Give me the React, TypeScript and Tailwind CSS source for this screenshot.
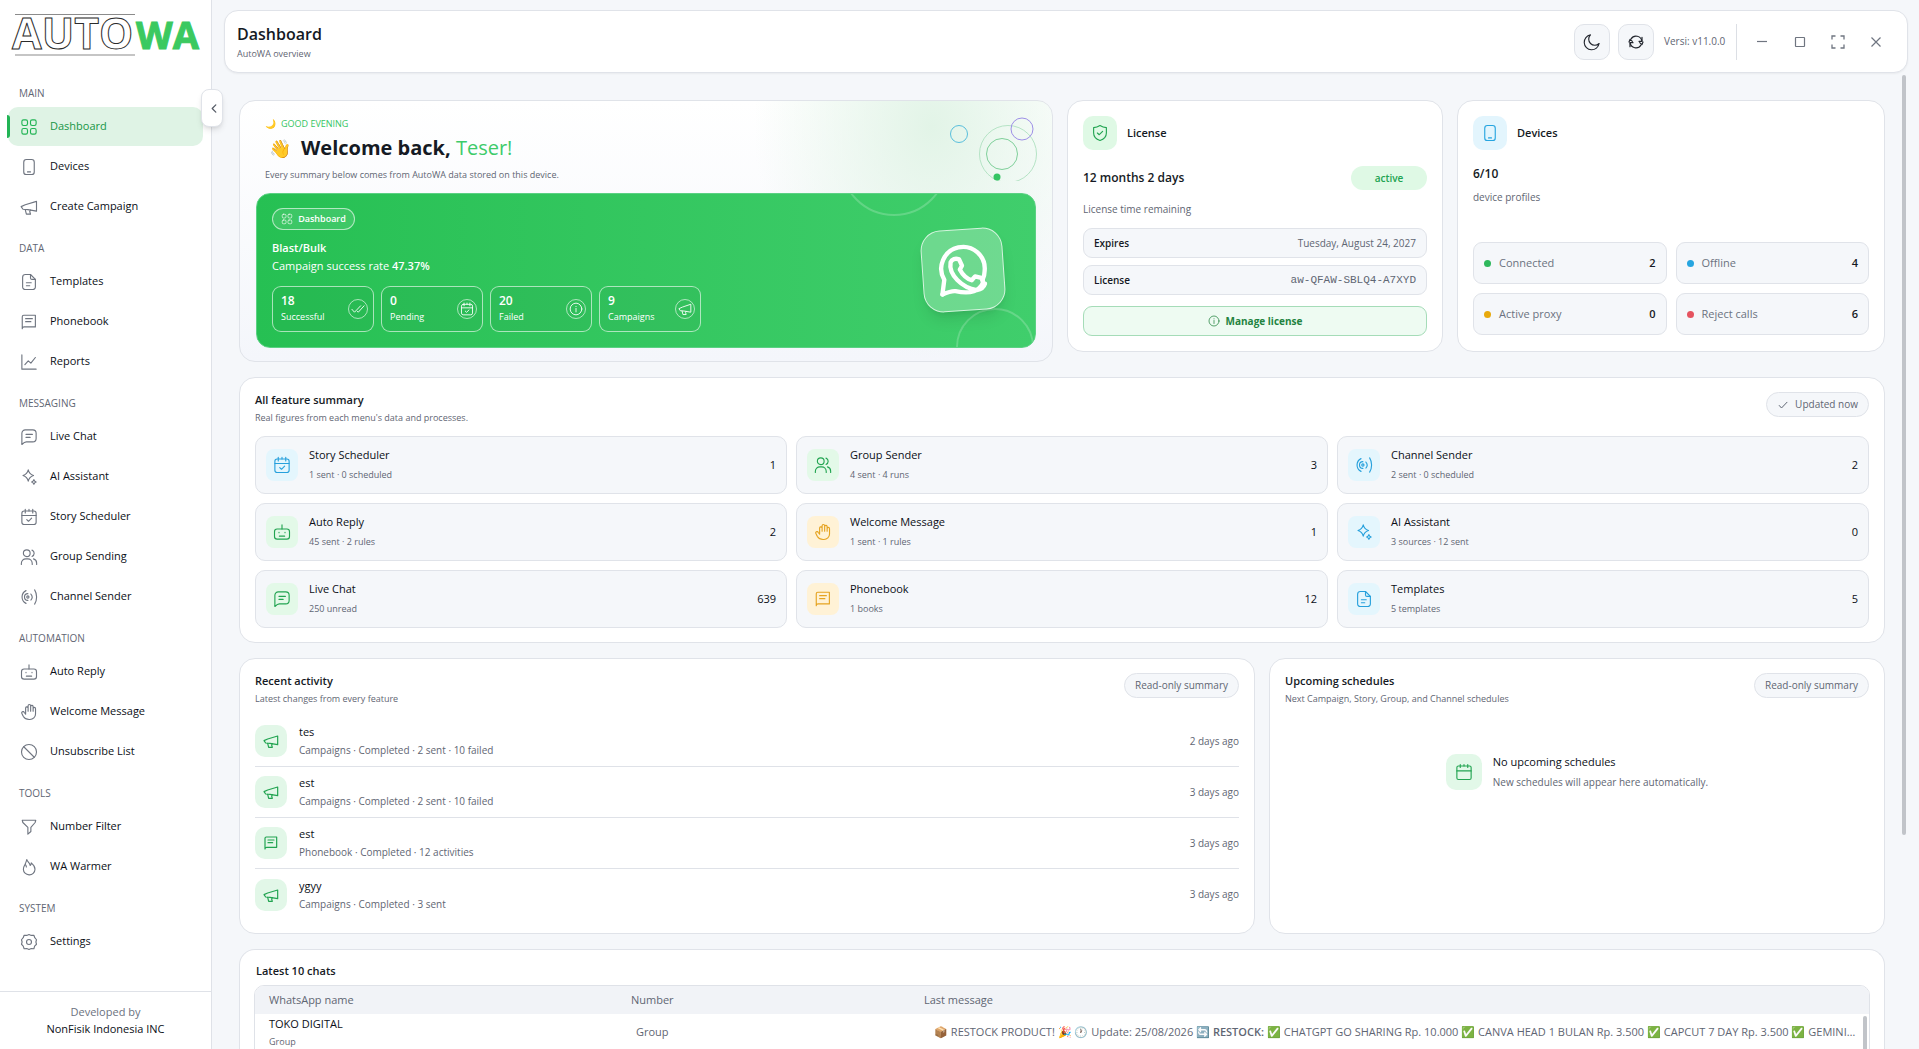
import React from "react";

type IconName =
  | "grid" | "phone" | "megaphone" | "file" | "book" | "chart" | "chat" | "sparkles" | "calendarCheck"
  | "users" | "radar" | "bot" | "hand" | "block" | "filter" | "flame" | "gear" | "shield" | "info"
  | "checks" | "check" | "calendar" | "moon" | "refresh";

const paths: Record<IconName, React.ReactNode> = {
  grid: (
    <>
      <rect x="2.5" y="2.5" width="7.5" height="7.5" rx="2.2" />
      <rect x="14" y="2.5" width="7.5" height="7.5" rx="2.2" />
      <rect x="2.5" y="14" width="7.5" height="7.5" rx="2.2" />
      <rect x="14" y="14" width="7.5" height="7.5" rx="2.2" />
    </>
  ),
  phone: (
    <>
      <rect x="5" y="2" width="14" height="20" rx="3.5" />
      <path d="M10 18.5h4" />
    </>
  ),
  megaphone: (
    <>
      <path d="M22 4.500v13L10.500 15.500l-6.500-.5L1.500 11.500 7 9z" />
      <path d="M7 15.500l1.500 6h5.500l-1-3.500 1-2" />
    </>
  ),
  file: (
    <>
      <path d="M14 2H7a3.500 3.500 0 0 0-3.500 3.500v13A3.500 3.500 0 0 0 7 22h10a3.500 3.500 0 0 0 3.500-3.500V8.500z" />
      <path d="M14 2v4.500a2 2 0 0 0 2 2h4.500M8.500 13H15M8.500 17h4.500" />
    </>
  ),
  book: (
    <>
      <path d="M3 21V5a2 2 0 0 1 2-2h15.500v15.500H5.500c-1.500 0-2.500 1-2.500 2.500z" />
      <path d="M7.500 7.500h9M7.500 11.500h7" />
    </>
  ),
  chart: (
    <>
      <path d="M2.500 2.500v19h19" />
      <path d="M6.500 15.500l4.500-5 3.500 3L20.500 6" />
    </>
  ),
  chat: (
    <>
      <path d="M2.500 22V7A4.500 4.500 0 0 1 7 2.500h10A4.500 4.500 0 0 1 21.500 7v7a4.500 4.500 0 0 1-4.500 4.500H8.500c-2.500 0-4 1.500-6 3.500z" />
      <path d="M8 8.500h8.500M8 12.500h5.500" />
    </>
  ),
  sparkles: (
    <>
      <path d="M11 2.500c1 4.500 2.500 6 7 7.500-4.500 1.500-6 3-7 7.500-1-4.500-2.500-6-7-7.500 4.500-1.500 6-3 7-7.500z" />
      <path d="M18.500 15.500c.5 2 1 2.500 3 3.200-2 .6-2.500 1.100-3 3-.5-1.900-1-2.400-3-3 2-.7 2.500-1.200 3-3.200z" />
    </>
  ),
  calendarCheck: (
    <>
      <rect x="2.500" y="4" width="19" height="18" rx="3" />
      <path d="M2.500 10h19M7 1.800V6.500M12 1.800V4M17 1.800V6.500M9 15.500l2.300 2.200 4.200-4.200" />
    </>
  ),
  users: (
    <>
      <circle cx="9" cy="7" r="4.500" />
      <path d="M1.800 22v-1.500a6 6 0 0 1 6-6h2.500a6 6 0 0 1 6 6V22M16 2.800a4.500 4.500 0 0 1 0 8.400M18 14.500a6 6 0 0 1 4.200 5.700V22" />
    </>
  ),
  radar: (
    <>
      <circle cx="10.500" cy="12" r="1.500" />
      <path d="M10.500 7.500a4.500 4.500 0 0 0 0 9M14.500 8a6 6 0 0 1 0 8M8 3.500a9.500 9.500 0 0 0 0 17M19.500 2.500c3.500 5.500 3.500 13.500 0 19" />
    </>
  ),
  bot: (
    <>
      <rect x="2" y="8" width="20" height="13.500" rx="3.500" />
      <path d="M12 2.500V8M8 12.500v.5M16 12.500v.5M8.500 17.500h7" />
    </>
  ),
  hand: (
    <path d="M7.500 14V6.500a1.700 1.700 0 0 1 3.300 0M10.800 11V3.700a1.700 1.700 0 0 1 3.400 0V11M14.200 4.500a1.700 1.700 0 0 1 3.300 0V11M17.500 7.500a1.600 1.600 0 0 1 3.200 0v7A7.500 7.500 0 0 1 13.200 22h-1C8 22 6 20.500 4.500 18l-2-4a1.700 1.700 0 0 1 3-1.700l2 2.700" />
  ),
  block: (
    <>
      <circle cx="12" cy="12" r="10" />
      <path d="M5 5l14 14" />
    </>
  ),
  filter: <path d="M3 3h18l-.8 3-5.700 6.500V18l-4 3.500v-9L3.800 6z" />,
  flame: (
    <path d="M9 2c1 3.500 4 4 4.500 8 1-.8 1.500-2 1.500-3.500 3 2.500 5 5 5 8.500A7.600 7.600 0 0 1 12 22.500 7.600 7.600 0 0 1 4.500 15c0-3.500 1.500-4.500 2.500-7 .8-2 1.500-3.500 2-6zM7 8.500c1 1 1.500 2 1.500 3.500" />
  ),
  gear: (
    <>
      <path d="M12 2l3 1.200 3.500-.2 1.200 3.300L22 9l-.8 3 .8 3-2.500 2.500-1 3.500-3.500-.2L12 22l-3-1.200-3.500.2-1.200-3.500L2 15l.8-3L2 9l2.300-2.700L5.500 3l3.500.2z" />
      <circle cx="12" cy="12" r="3.300" />
    </>
  ),
  shield: (
    <>
      <path d="M12 2C9.500 3.500 7 4.500 3.500 4.800V12c0 5 3.500 8.300 8.500 10 5-1.700 8.500-5 8.500-10V4.800C17 4.500 14.500 3.500 12 2z" />
      <path d="M8.500 12l2.500 2.300 4.500-4.500" />
    </>
  ),
  info: (
    <>
      <circle cx="12" cy="12" r="10" />
      <path d="M12 11v6M12 7.500v.3" />
    </>
  ),
  checks: <path d="M1.500 12.500l4.500 5L16.500 6.500M11 16l1.500 1.500L22.500 6.500" />,
  check: <path d="M4.500 13l4.500 5L20 6.500" />,
  calendar: (
    <>
      <rect x="2.500" y="4" width="19" height="18" rx="2" />
      <path d="M2.500 10.500h19M7 2v4M12 2v2M17 2v4" />
    </>
  ),
  moon: <path d="M21.500 14A10 10 0 1 1 10 2.500 8 8 0 0 0 21.500 14z" />,
  refresh: (
    <>
      <path d="M20.800 11A8.800 8.800 0 0 0 4.500 7.500M3.200 13A8.800 8.800 0 0 0 19.500 16.500" />
      <path d="M1.500 12l1.700-4 3.300 3M17.500 13l3.300 3 1.700-4" />
      <path d="M21 5v6h-4.500M3 19v-6h4.500" />
    </>
  ),
};

function Icon({ name, className = "size-[18px]", stroke = 1.5 }: { name: IconName; className?: string; stroke?: number }) {
  return (
    <svg viewBox="0 0 24 24" className={className} fill="none" stroke="currentColor" strokeWidth={stroke} strokeLinecap="round" strokeLinejoin="round" aria-hidden="true">
      {paths[name]}
    </svg>
  );
}

const nav: { title: string; items: [IconName, string][] }[] = [
  { title: "MAIN", items: [["grid", "Dashboard"], ["phone", "Devices"], ["megaphone", "Create Campaign"]] },
  { title: "DATA", items: [["file", "Templates"], ["book", "Phonebook"], ["chart", "Reports"]] },
  {
    title: "MESSAGING",
    items: [["chat", "Live Chat"], ["sparkles", "AI Assistant"], ["calendarCheck", "Story Scheduler"], ["users", "Group Sending"], ["radar", "Channel Sender"]],
  },
  { title: "AUTOMATION", items: [["bot", "Auto Reply"], ["hand", "Welcome Message"], ["block", "Unsubscribe List"]] },
  { title: "TOOLS", items: [["filter", "Number Filter"], ["flame", "WA Warmer"]] },
  { title: "SYSTEM", items: [["gear", "Settings"]] },
];

function Logo() {
  return (
    <svg viewBox="0 0 190 60" className="ml-3 mt-1 h-[60px] w-[190px] shrink-0 overflow-visible" role="img" aria-label="AutoWA">
      <path d="M3 10.500H123M3 51H123" stroke="#8b8b8b" strokeWidth="1" />
      <text x="0" y="45" fontSize="43" fontWeight="700" fontFamily="Open Sans" fill="#fff" stroke="#2b2b2b" strokeWidth="1">
        AUTO
      </text>
      <text x="124" y="45" fontSize="38" fontWeight="700" fontFamily="Open Sans" fill="#3bc960" stroke="#3bc960" strokeWidth="1">
        WA
      </text>
    </svg>
  );
}

function Sidebar() {
  return (
    <aside className="relative flex w-[212px] shrink-0 flex-col border-r border-[#dfe2e8] bg-white">
      <Logo />
      <nav className="mt-2 flex-1" aria-label="Main">
        {nav.map((group) => (
          <section key={group.title}>
            <h2 className="flex h-[35px] items-center pl-[19px] pt-2 text-[10px] font-medium text-[#5f6673]">{group.title}</h2>
            <ul>
              {group.items.map(([icon, label]) => {
                const active = label === "Dashboard";
                return (
                  <li key={label} className="pb-px">
                    <a
                      href="#"
                      aria-current={active ? "page" : undefined}
                      className={
                        active
                          ? "relative mx-2 flex h-[39px] items-center gap-3 rounded-[10px] bg-[#dff3e5] pl-3 text-[11px] font-medium text-[#179645]"
                          : "mx-2 flex h-[39px] items-center gap-3 rounded-[10px] pl-3 text-[11px] font-medium text-[#0b0f17]"
                      }
                    >
                      {active && <span className="absolute -left-px top-2 h-[23px] w-[3px] rounded-r bg-[#22b455]" />}
                      <span className={active ? "text-[#22b455]" : "text-[#6f7580]"}>
                        <Icon name={icon} />
                      </span>
                      {label}
                    </a>
                  </li>
                );
              })}
            </ul>
          </section>
        ))}
      </nav>
      <footer className="flex h-[58px] flex-col items-center justify-center border-t border-[#dfe2e8] pb-px text-[11px] leading-[17px]">
        <span className="text-[#6b7280]">Developed by</span>
        <span className="font-medium text-[#0b0f17]">NonFisik Indonesia INC</span>
      </footer>
      <button aria-label="Collapse sidebar" className="absolute -right-3 top-[89px] flex h-[38px] w-[22px] items-center justify-center rounded-lg border border-[#e0e3e9] bg-white pl-1 text-[#555b66] shadow-md">
        <svg viewBox="0 0 6 10" className="h-[9px] w-[6px]" fill="none" stroke="currentColor" strokeWidth="1.400" strokeLinecap="round" strokeLinejoin="round">
          <path d="M5 1L1 5l4 4" />
        </svg>
      </button>
    </aside>
  );
}

function Header() {
  return (
    <header className="ml-3 mr-[11px] mt-[10px] flex h-[63px] shrink-0 items-center rounded-[14px] border border-[#e0e3e9] bg-white pl-3 pr-3 shadow-xs">
      <div className="flex-1">
        <h1 className="text-[16px] leading-6 font-semibold text-[#151a24]">Dashboard</h1>
        <p className="text-[9px] leading-4 text-[#5f6673]">AutoWA overview</p>
      </div>
      <div className="flex items-center gap-2 text-[#22262e]">
        <button aria-label="Dark mode" className="flex size-9 items-center justify-center rounded-[10px] border border-[#e0e3e9] bg-[#f5f7fa]">
          <Icon name="moon" />
        </button>
        <button aria-label="Refresh" className="flex size-9 items-center justify-center rounded-[10px] border border-[#e0e3e9] bg-[#f5f7fa]">
          <Icon name="refresh" className="size-4" stroke={1.800} />
        </button>
        <p className="ml-[2px] w-[61px] whitespace-nowrap text-[10px] text-[#5f6673]">
          Versi: <span className="font-medium">v11.0.0</span>
        </p>
      </div>
      <div className="ml-[11px] flex h-9 items-center border-l border-[#dcdfe5] pl-[6px] text-[#6f7580]">
        <button aria-label="Minimize" className="flex h-9 w-[38px] items-center justify-center">
          <svg viewBox="0 0 14 14" className="size-[14px]" stroke="currentColor" strokeWidth="1.200"><path d="M2 6.500h10" /></svg>
        </button>
        <button aria-label="Maximize" className="flex h-9 w-[38px] items-center justify-center">
          <svg viewBox="0 0 14 14" className="size-[14px]" fill="none" stroke="currentColor" strokeWidth="1.200"><rect x="2.500" y="2.500" width="9" height="9" rx="0.500" /></svg>
        </button>
        <button aria-label="Full screen" className="flex h-9 w-[38px] items-center justify-center">
          <svg viewBox="0 0 14 14" className="size-[14px]" fill="none" stroke="currentColor" strokeWidth="1.300"><path d="M1 4.500V1h3.500M9.500 1H13v3.500M13 9.500V13H9.500M4.500 13H1V9.500" /></svg>
        </button>
        <button aria-label="Close" className="flex h-9 w-[38px] items-center justify-center">
          <svg viewBox="0 0 14 14" className="size-[14px]" stroke="currentColor" strokeWidth="1.200"><path d="M2.500 2.500l9 9M11.500 2.500l-9 9" /></svg>
        </button>
      </div>
    </header>
  );
}

const heroStats: [string, string, IconName][] = [
  ["18", "Successful", "checks"],
  ["0", "Pending", "calendarCheck"],
  ["20", "Failed", "info"],
  ["9", "Campaigns", "megaphone"],
];

function Hero() {
  return (
    <section className="relative h-[262px] overflow-hidden rounded-[16px] border border-[#e0e3e9] bg-linear-to-b from-white to-[#f4f6fb] px-4 pt-[15px]">
      <div className="absolute inset-y-0 right-0 w-[300px] bg-radial-[at_60%_10%] from-[#e2f4e7] to-transparent to-70%" />
      <svg viewBox="0 0 100 70" className="absolute right-3 top-[10px] h-[70px] w-[100px]" fill="none" aria-hidden="true">
        <circle cx="19" cy="23" r="8.500" stroke="#59bfdc" />
        <circle cx="68" cy="43" r="28.500" stroke="#b5e3c5" />
        <circle cx="62" cy="43" r="15.500" stroke="#7fcf9a" />
        <circle cx="82" cy="18" r="11" stroke="#9d8fe6" />
        <circle cx="57" cy="66" r="3.500" fill="#34c563" />
      </svg>
      <div className="relative pl-[9px]">
        <p className="flex h-4 items-center text-[9px] text-[#34c563]"><span className="mr-[5px]">🌙</span>GOOD EVENING</p>
        <h2 className="flex h-8 items-center whitespace-pre pl-1 text-[20px] font-bold text-[#151a24]">
          <span className="mr-[10px] text-[18px]">👋</span>Welcome back, <span className="font-medium text-[#3dcb6a]">Teser!</span>
        </h2>
        <p className="mt-[2px] h-[18px] text-[9px] leading-[18px] text-[#5f6673]">Every summary below comes from AutoWA data stored on this device.</p>
      </div>
      <div className="relative mt-[9px] h-[155px] overflow-hidden rounded-[14px] border border-[#5bd183] bg-linear-to-r from-[#26c053] to-[#40ce6c] px-[15px] pt-[14px] text-white">
        <span className="absolute -top-[86px] right-[87px] size-[108px] rounded-full border-2 border-white/20" />
        <span className="absolute -bottom-[39px] right-px size-[78px] rounded-full border-2 border-white/20" />
        <span className="absolute right-[31px] top-[35px] flex size-[82px] -rotate-4 items-center justify-center rounded-[20px] border border-white/70 bg-white/25 shadow-lg">
          <svg viewBox="0 0 24 24" className="size-[58px]" fill="none" stroke="currentColor" strokeWidth="1.800" strokeLinejoin="round" strokeLinecap="round">
            <path d="M2.800 21.500l1.200-6a9 9 0 1 1 16.900-2.500c-.1 1.500-.5 2.700-1.200 3.800" />
            <path d="M2.800 21.500c2-.7 4-1.300 5.500-1 4.500 1.300 8 1 10-.7 2-1.800 2-3 1-4l-2.500-.8-1.500 1.500c-2-.8-3.600-2.500-4.600-4.800l1-1.500-1-2.700c-1.500-.7-3-.3-3.600 1-1.300 5 4 10.800 10 12.200 1.800-.2 3-1 3.600-2.500" />
          </svg>
        </span>
        <div className="relative">
          <span className="flex h-[22px] w-[83px] items-center justify-center gap-[5px] rounded-full border border-white/60 bg-white/10 text-[9px] font-semibold">
            <Icon name="grid" className="size-3" stroke={1.300} />
            Dashboard
          </span>
          <p className="mt-[9px] text-[11px] leading-[18px] font-semibold">Blast/Bulk</p>
          <p className="text-[11px] leading-[18px]">Campaign success rate <b className="font-semibold">47.37%</b></p>
          <dl className="mt-[11px] flex gap-[7px]">
            {heroStats.map(([n, label, icon]) => (
              <div key={label} className="flex h-[46px] w-[102px] items-center justify-between rounded-[9px] border border-white/60 bg-black/3 pl-2 pr-[5px]">
                <div className="flex flex-col-reverse">
                  <dt className="text-[9px] leading-4 font-medium">{label}</dt>
                  <dd className="text-[12px] leading-4 font-semibold">{n}</dd>
                </div>
                <span className="flex size-5 items-center justify-center rounded-full border border-white/60">
                  <Icon name={icon} className="size-[14px]" />
                </span>
              </div>
            ))}
          </dl>
        </div>
      </div>
    </section>
  );
}

function License() {
  return (
    <section className="h-[252px] rounded-[16px] border border-[#e0e3e9] bg-white px-[15px] pt-[15px]">
      <div className="flex items-center gap-[10px]">
        <span className="flex size-[34px] items-center justify-center rounded-[10px] bg-[#dff9e5] text-[#22a451]"><Icon name="shield" /></span>
        <h2 className="text-[11px] font-semibold">License</h2>
      </div>
      <div className="mt-4 flex h-6 items-center justify-between">
        <p className="text-[12px] font-semibold">12 months 2 days</p>
        <span className="flex h-6 w-[76px] items-center justify-center rounded-full bg-[#dff9e5] text-[10px] font-semibold text-[#22a451]">active</span>
      </div>
      <p className="mt-[10px] text-[10px] leading-[18px] text-[#5f6673]">License time remaining</p>
      <dl className="mt-[10px] space-y-[7px]">
        <div className="flex h-[30px] items-center justify-between rounded-[9px] border border-[#e0e3e9] bg-[#f5f7fa] px-[10px]">
          <dt className="text-[10px] font-semibold">Expires</dt>
          <dd className="text-[10px] text-[#5f6673]">Tuesday, August 24, 2027</dd>
        </div>
        <div className="flex h-[30px] items-center justify-between rounded-[9px] border border-[#e0e3e9] bg-[#f5f7fa] px-[10px]">
          <dt className="text-[10px] font-semibold">License</dt>
          <dd className="font-['Liberation_Mono',monospace] text-[11px] text-[#5f6673]">aw-QFAW-SBLQ4-A7XYD</dd>
        </div>
      </dl>
      <button className="mt-[11px] flex h-[30px] w-full items-center justify-center gap-[6px] rounded-[9px] border border-[#a5dcb8] bg-[#eefbf2] text-[10px] font-bold text-[#23833f]">
        <Icon name="info" className="size-3" />
        Manage license
      </button>
    </section>
  );
}

const deviceStats = [
  ["Connected", "2", "bg-[#2eb85c]"],
  ["Offline", "4", "bg-[#26a5e0]"],
  ["Active proxy", "0", "bg-[#e8a90c]"],
  ["Reject calls", "6", "bg-[#e5535f]"],
];

function Devices() {
  return (
    <section className="h-[252px] rounded-[16px] border border-[#e0e3e9] bg-white px-[15px] pt-[15px]">
      <div className="flex items-center gap-[10px]">
        <span className="flex size-[34px] items-center justify-center rounded-[10px] bg-[#e3f5fd] text-[#26a5e0]"><Icon name="phone" /></span>
        <h2 className="text-[11px] font-semibold">Devices</h2>
      </div>
      <p className="mt-[14px] text-[12px] leading-5 font-semibold">6/10</p>
      <p className="mt-1 text-[10px] leading-[18px] text-[#5f6673]">device profiles</p>
      <dl className="mt-9 grid grid-cols-2 gap-[9px]">
        {deviceStats.map(([label, n, dot]) => (
          <div key={label} className="flex h-[42px] items-center rounded-[9px] border border-[#e0e3e9] bg-[#f5f7fa] px-[10px]">
            <span className={`mr-2 size-[7px] rounded-full ${dot}`} />
            <dt className="flex-1 text-[11px] text-[#6b7280]">{label}</dt>
            <dd className="text-[11px] font-semibold">{n}</dd>
          </div>
        ))}
      </dl>
    </section>
  );
}

const blue = "bg-[#e4f6fd] text-[#26a0dc]";
const green = "bg-[#e3f9e8] text-[#22a451]";
const amber = "bg-[#fff2d6] text-[#e5a320]";

const features: [IconName, string, string, string, string][] = [
  ["calendarCheck", blue, "Story Scheduler", "1 sent · 0 scheduled", "1"],
  ["users", green, "Group Sender", "4 sent · 4 runs", "3"],
  ["radar", blue, "Channel Sender", "2 sent · 0 scheduled", "2"],
  ["bot", green, "Auto Reply", "45 sent · 2 rules", "2"],
  ["hand", amber, "Welcome Message", "1 sent · 1 rules", "1"],
  ["sparkles", blue, "AI Assistant", "3 sources · 12 sent", "0"],
  ["chat", green, "Live Chat", "250 unread", "639"],
  ["book", amber, "Phonebook", "1 books", "12"],
  ["file", blue, "Templates", "5 templates", "5"],
];

function CardHead({ title, sub, badge, icon }: { title: string; sub: string; badge: string; icon?: IconName }) {
  return (
    <div className="flex items-start justify-between">
      <div>
        <h2 className="text-[11px] leading-[18px] font-semibold">{title}</h2>
        <p className="text-[9px] leading-[18px] text-[#5f6673]">{sub}</p>
      </div>
      <span className="mt-px flex h-[25px] items-center gap-[6px] whitespace-nowrap rounded-full border border-[#e0e3e9] bg-[#f5f7fa] px-[10px] text-[10px] text-[#5f6673]">
        {icon && <Icon name={icon} className="size-3" stroke={2} />}
        {badge}
      </span>
    </div>
  );
}

function Features() {
  return (
    <section className="rounded-[16px] border border-[#e0e3e9] bg-white px-[15px] pb-[14px] pt-[13px]">
      <CardHead title="All feature summary" sub="Real figures from each menu's data and processes." badge="Updated now" icon="check" />
      <ul className="mt-[9px] grid grid-cols-3 gap-[9px]">
        {features.map(([icon, tone, name, sub, n]) => (
          <li key={name} className="flex h-[58px] items-center rounded-[10px] border border-[#e0e3e9] bg-[#f5f7fa] px-[10px]">
            <span className={`flex size-8 items-center justify-center rounded-lg ${tone}`}><Icon name={icon} /></span>
            <div className="ml-[11px] flex-1">
              <h3 className="text-[11px] leading-5 font-medium text-[#0b0f17]">{name}</h3>
              <p className="text-[9px] leading-5 text-[#5f6673]">{sub}</p>
            </div>
            <span className="text-[11px] font-medium text-[#0b0f17]">{n}</span>
          </li>
        ))}
      </ul>
    </section>
  );
}

const activity: [IconName, string, string, string][] = [
  ["megaphone", "tes", "Campaigns · Completed · 2 sent · 10 failed", "2 days ago"],
  ["megaphone", "est", "Campaigns · Completed · 2 sent · 10 failed", "3 days ago"],
  ["book", "est", "Phonebook · Completed · 12 activities", "3 days ago"],
  ["megaphone", "ygyy", "Campaigns · Completed · 3 sent", "3 days ago"],
];

function Activity() {
  return (
    <section className="h-[276px] rounded-[16px] border border-[#e0e3e9] bg-white px-[15px] pt-[13px]">
      <CardHead title="Recent activity" sub="Latest changes from every feature" badge="Read-only summary" />
      <ul className="mt-2 divide-y divide-[#dfe2e8]">
        {activity.map(([icon, name, sub, time], i) => (
          <li key={i} className="flex h-[51px] items-center">
            <span className="flex size-8 items-center justify-center rounded-[10px] bg-[#e2f7e8] text-[#22a451]"><Icon name={icon} className="size-4" stroke={1.800} /></span>
            <div className="ml-3 flex-1">
              <h3 className="text-[11px] leading-[19px] font-medium text-[#0b0f17]">{name}</h3>
              <p className="text-[10px] leading-[19px] text-[#5f6673]">{sub}</p>
            </div>
            <time className="text-[10px] text-[#5f6673]">{time}</time>
          </li>
        ))}
      </ul>
    </section>
  );
}

function Upcoming() {
  return (
    <section className="h-[276px] rounded-[16px] border border-[#e0e3e9] bg-white px-[15px] pt-[13px]">
      <CardHead title="Upcoming schedules" sub="Next Campaign, Story, Group, and Channel schedules" badge="Read-only summary" />
      <div className="mt-11 flex items-center justify-center gap-[11px]">
        <span className="flex size-9 items-center justify-center rounded-[10px] bg-[#e2f8e8] text-[#22a451]"><Icon name="calendar" /></span>
        <div>
          <h3 className="text-[11px] leading-5 font-medium text-[#0b0f17]">No upcoming schedules</h3>
          <p className="text-[10px] leading-5 text-[#5f6673]">New schedules will appear here automatically.</p>
        </div>
      </div>
    </section>
  );
}

function Chats() {
  return (
    <section className="rounded-t-[16px] border border-b-0 border-[#e0e3e9] bg-white px-[14px] pt-3">
      <h2 className="pl-[2px] text-[11px] leading-[18px] font-semibold">Latest 10 chats</h2>
      <div className="relative mt-[5px] h-[120px] overflow-hidden rounded-t-[10px] border border-[#dfe2e8]">
        <table className="w-full table-fixed text-left text-[11px] text-[#5f6673]">
          <thead className="bg-[#f1f3f7]">
            <tr className="h-[28px]">
              <th scope="col" className="w-[362px] pl-[14px] font-normal">WhatsApp name</th>
              <th scope="col" className="w-[293px] pl-[14px] font-normal">Number</th>
              <th scope="col" className="pl-[14px] font-normal">Last message</th>
            </tr>
          </thead>
          <tbody>
            <tr className="h-[36px]">
              <td className="pl-[14px]">
                <span className="block leading-[18px] font-medium text-[#0b0f17]">TOKO DIGITAL</span>
                <span className="block text-[9px] leading-[17px]">Group</span>
              </td>
              <td className="pl-[19px]">Group</td>
              <td className="truncate pl-6 pr-3">
                📦 RESTOCK PRODUCT! 🎉 🕐 Update: 25/08/2026 🔄 <b className="font-semibold">RESTOCK:</b> ✅ CHATGPT GO SHARING Rp. 10.000 ✅ CANVA HEAD 1 BULAN Rp. 3.500 ✅ CAPCUT 7 DAY Rp. 3.500 ✅ GEMINI R...
              </td>
            </tr>
          </tbody>
        </table>
        <span className="absolute bottom-0 right-[2px] top-[30px] w-1 rounded-full bg-[#c1c4c9]" />
      </div>
    </section>
  );
}

export default function App() {
  return (
    <div className="flex h-screen overflow-hidden bg-[#f5f7fa] font-['Open_Sans','Noto_Sans',sans-serif] text-[#151a24]">
      <Sidebar />
      <main className="relative flex min-w-0 flex-1 flex-col">
        <Header />
        <div className="flex min-h-0 flex-1 flex-col gap-[15px] overflow-hidden pl-[27px] pr-[34px] pt-[27px]">
          <div className="grid shrink-0 grid-cols-[814fr_376fr_428fr] items-start gap-[14px]">
            <Hero />
            <License />
            <Devices />
          </div>
          <div className="shrink-0"><Features /></div>
          <div className="grid shrink-0 grid-cols-[1016fr_616fr] gap-[14px]">
            <Activity />
            <Upcoming />
          </div>
          <div className="shrink-0"><Chats /></div>
        </div>
        <span className="absolute right-[13px] top-[75px] h-[760px] w-1 rounded-full bg-[#c1c4c9]" />
      </main>
    </div>
  );
}
